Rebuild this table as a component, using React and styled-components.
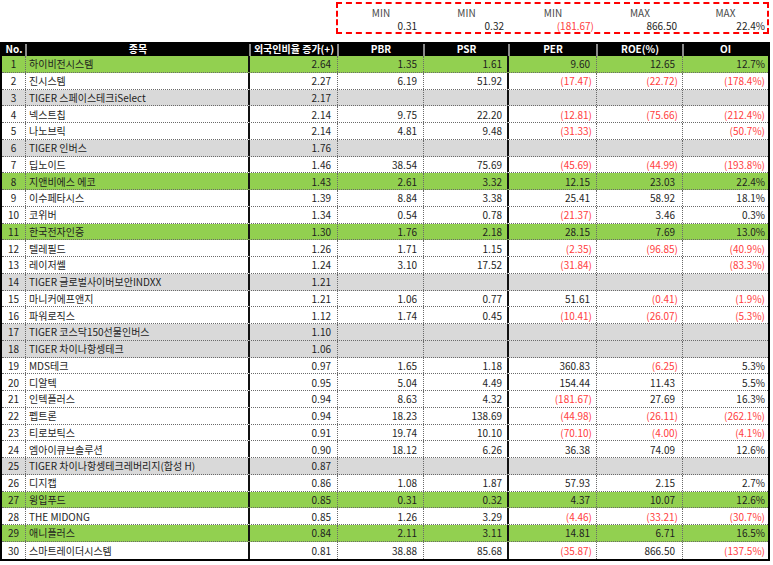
import React from "react";
import styled, { createGlobalStyle } from "styled-components";

const GlobalStyle = createGlobalStyle`
  * { box-sizing: border-box; }
  body {
    margin: 0;
    background: #fff;
    font-family: "Noto Sans CJK KR", "Noto Sans", sans-serif;
    color: #222;
  }
`;

const COLS = "24px 224px 88px 86px 85px 88px 86px 85px";

const rows = [
  [1, "하이비전시스템", "2.64", "1.35", "1.61", "9.60", "12.65", "12.7%", "green"],
  [2, "진시스템", "2.27", "6.19", "51.92", "(17.47)", "(22.72)", "(178.4%)", "white"],
  [3, "TIGER 스페이스테크iSelect", "2.17", "", "", "", "", "", "grey"],
  [4, "넥스트칩", "2.14", "9.75", "22.20", "(12.81)", "(75.66)", "(212.4%)", "white"],
  [5, "나노브릭", "2.14", "4.81", "9.48", "(31.33)", "", "(50.7%)", "white"],
  [6, "TIGER 인버스", "1.76", "", "", "", "", "", "grey"],
  [7, "딥노이드", "1.46", "38.54", "75.69", "(45.69)", "(44.99)", "(193.8%)", "white"],
  [8, "지앤비에스 에코", "1.43", "2.61", "3.32", "12.15", "23.03", "22.4%", "green"],
  [9, "이수페타시스", "1.39", "8.84", "3.38", "25.41", "58.92", "18.1%", "white"],
  [10, "코위버", "1.34", "0.54", "0.78", "(21.37)", "3.46", "0.3%", "white"],
  [11, "한국전자인증", "1.30", "1.76", "2.18", "28.15", "7.69", "13.0%", "green"],
  [12, "텔레필드", "1.26", "1.71", "1.15", "(2.35)", "(96.85)", "(40.9%)", "white"],
  [13, "레이저쎌", "1.24", "3.10", "17.52", "(31.84)", "", "(83.3%)", "white"],
  [14, "TIGER 글로벌사이버보안INDXX", "1.21", "", "", "", "", "", "grey"],
  [15, "마니커에프앤지", "1.21", "1.06", "0.77", "51.61", "(0.41)", "(1.9%)", "white"],
  [16, "파워로직스", "1.12", "1.74", "0.45", "(10.41)", "(26.07)", "(5.3%)", "white"],
  [17, "TIGER 코스닥150선물인버스", "1.10", "", "", "", "", "", "grey"],
  [18, "TIGER 차이나항셍테크", "1.06", "", "", "", "", "", "grey"],
  [19, "MDS테크", "0.97", "1.65", "1.18", "360.83", "(6.25)", "5.3%", "white"],
  [20, "디알텍", "0.95", "5.04", "4.49", "154.44", "11.43", "5.5%", "white"],
  [21, "인텍플러스", "0.94", "8.63", "4.32", "(181.67)", "27.69", "16.3%", "white"],
  [22, "펩트론", "0.94", "18.23", "138.69", "(44.98)", "(26.11)", "(262.1%)", "white"],
  [23, "티로보틱스", "0.91", "19.74", "10.10", "(70.10)", "(4.00)", "(4.1%)", "white"],
  [24, "엠아이큐브솔루션", "0.90", "18.12", "6.26", "36.38", "74.09", "12.6%", "white"],
  [25, "TIGER 차이나항셍테크레버리지(합성 H)", "0.87", "", "", "", "", "", "grey"],
  [26, "디지캡", "0.86", "1.08", "1.87", "57.93", "2.15", "2.7%", "white"],
  [27, "윙입푸드", "0.85", "0.31", "0.32", "4.37", "10.07", "12.6%", "green"],
  [28, "THE MIDONG", "0.85", "1.26", "3.29", "(4.46)", "(33.21)", "(30.7%)", "white"],
  [29, "애니플러스", "0.84", "2.11", "3.11", "14.81", "6.71", "16.5%", "green"],
  [30, "스마트레이더시스템", "0.81", "38.88", "85.68", "(35.87)", "866.50", "(137.5%)", "white"],
];

const summary = [
  ["MIN", "0.31", 7],
  ["MIN", "0.32", 5],
  ["MIN", "(181.67)", 3],
  ["MAX", "866.50", 6],
  ["MAX", "22.4%", 3],
];

const tones = { green: "#92d050", grey: "#d9d9d9", white: "#ffffff" };

const Page = styled.div`
  width: 773px;
  padding-top: 2px;
  font-size: 10px;
`;

const SummaryBox = styled.div`
  margin-left: 336px;
  width: 433px;
  height: 32px;
  border: 2px dashed #ff0000;
  display: grid;
  grid-template-columns: 86px 85px 88px 86px 85px;
  grid-template-rows: 13px 13px;
  padding-top: 2px;
`;

const SumLabel = styled.div`
  text-align: center;
  color: #4a4a4a;
  line-height: 13px;
`;

const SumValue = styled.div`
  text-align: right;
  line-height: 13px;
  padding-right: ${(p) => p.$pad}px;
  color: ${(p) => (p.$neg ? "#ff4040" : "#1e1e1e")};
`;

const Table = styled.div`
  margin-top: 8px;
  width: 770px;
  border-left: 2px solid #000;
  border-right: 2px solid #000;
  border-bottom: 2px solid #000;
`;

const HeadRow = styled.div`
  display: grid;
  grid-template-columns: ${COLS};
  height: 14px;
  background: #000;
  color: #fff;
  font-weight: bold;
`;

const HeadCell = styled.div`
  position: relative;
  text-align: center;
  line-height: 14px;
  white-space: nowrap;
  &::after {
    content: "";
    display: ${(p) => (p.$last ? "none" : "block")};
    position: absolute;
    right: -1px;
    top: 2px;
    bottom: 0;
    width: 2px;
    background: #8a8a8a;
  }
`;

const Row = styled.div`
  display: grid;
  grid-template-columns: ${COLS};
  height: 16.75px;
  background: ${(p) => tones[p.$tone]};
  border-bottom: ${(p) => (p.$last ? "none" : "1px dotted #6a6a6a")};
`;

const Cell = styled.div`
  display: flex;
  align-items: center;
  justify-content: ${(p) =>
    p.$align === "left" ? "flex-start" : p.$align === "center" ? "center" : "flex-end"};
  padding: 0 ${(p) => p.$pad || 0}px 0 ${(p) => (p.$align === "left" ? 3 : 0)}px;
  white-space: nowrap;
  overflow: hidden;
  color: ${(p) => (p.$neg ? "#ff4040" : "#1e1e1e")};
  border-right: ${(p) =>
    p.$thick ? "2px solid #111" : p.$last ? "none" : "1px dotted #6a6a6a"};
`;

// right padding per numeric column: [positive, negative]
const pads = [
  [6, 6],
  [6, 6],
  [5, 5],
  [6, 4],
  [7, 4],
  [3, 3],
];

const headers = ["No.", "종목", "외국인비율 증가(+)", "PBR", "PSR", "PER", "ROE(%)", "OI"];

export default function App() {
  return (
    <Page>
      <GlobalStyle />
      <SummaryBox>
        {summary.map(([label], i) => (
          <SumLabel key={"l" + i}>{label}</SumLabel>
        ))}
        {summary.map(([, value, pad], i) => (
          <SumValue key={"v" + i} $pad={pad} $neg={value.startsWith("(")}>
            {value}
          </SumValue>
        ))}
      </SummaryBox>

      <Table>
        <HeadRow>
          {headers.map((h, i) => (
            <HeadCell key={h} $last={i === headers.length - 1}>
              {h}
            </HeadCell>
          ))}
        </HeadRow>
        {rows.map((r, idx) => {
          const [no, name, ...nums] = r;
          const tone = nums.pop();
          return (
            <Row key={no} $tone={tone} $last={idx === rows.length - 1}>
              <Cell $align="center">{no}</Cell>
              <Cell $align="left" $thick>
                {name}
              </Cell>
              {nums.map((v, i) => {
                const neg = v.startsWith("(");
                return (
                  <Cell
                    key={i}
                    $neg={neg}
                    $pad={pads[i][neg ? 1 : 0]}
                    $thick={i === 2}
                    $last={i === nums.length - 1}
                  >
                    {v}
                  </Cell>
                );
              })}
            </Row>
          );
        })}
      </Table>
    </Page>
  );
}
